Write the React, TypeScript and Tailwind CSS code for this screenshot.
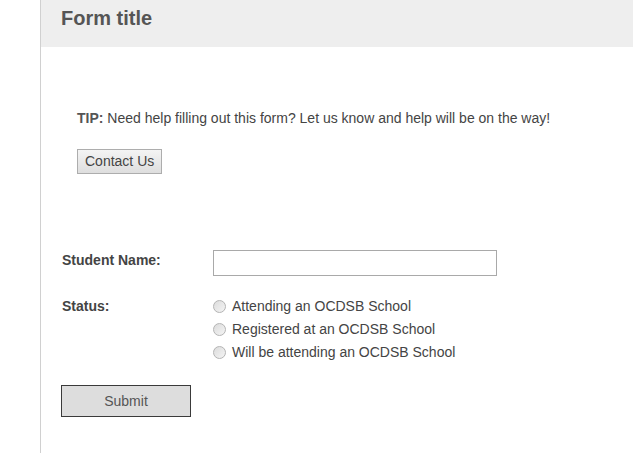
export default function App() {
  const options = [
    "Attending an OCDSB School",
    "Registered at an OCDSB School",
    "Will be attending an OCDSB School",
  ];

  return (
    <div className="flex min-h-[453px] bg-white font-['Liberation_Sans',Arial,sans-serif] text-[14px] text-[#444]">
      <div className="w-10 shrink-0" />
      <div className="flex-1 border-l border-[#d0d0d0]">
        <header className="h-[47px] bg-[#eeeeee] pl-5 pt-[7px]">
          <h1 className="text-[20px] font-bold leading-[23px] text-[#555]">Form title</h1>
        </header>

        <main className="px-5">
          <div className="mt-[63px] pl-4">
            <p className="leading-4">
              <span className="font-bold text-[#555]">TIP:</span> Need help filling out this form? Let us know and help will be on the way!
            </p>
            <button className="mt-[23px] h-[25px] border border-[#adadad] bg-gradient-to-b from-[#f4f4f4] to-[#dedede] px-[7px] text-[14px] text-[#444]">
              Contact Us
            </button>
          </div>

          <form className="mt-[76px]" onSubmit={(e) => e.preventDefault()}>
            <div className="flex items-start">
              <label className="w-[152px] pl-[1px] pt-[2px] font-bold leading-4 text-[#444]">Student Name:</label>
              <input className="h-[26px] w-[284px] border border-[#a9a9a9] px-1 outline-none" />
            </div>

            <div className="mt-[19px] flex items-start">
              <div className="w-[152px] pl-[1px] font-bold leading-[23px]">Status:</div>
              <div className="flex flex-col">
                {options.map((o) => (
                  <label key={o} className="flex h-[23px] items-center gap-[6px]">
                    <span className="h-[13px] w-[13px] rounded-full border border-[#b4b4b4] bg-gradient-to-br from-[#dcdcdc] to-[#f4f4f4]" />
                    <span>{o}</span>
                  </label>
                ))}
              </div>
            </div>

            <button type="submit" className="mt-[21px] h-[32px] w-[130px] border border-[#3a3a3a] bg-[#dddddd] text-[14px] text-[#555]">
              Submit
            </button>
          </form>
        </main>
      </div>
    </div>
  );
}
